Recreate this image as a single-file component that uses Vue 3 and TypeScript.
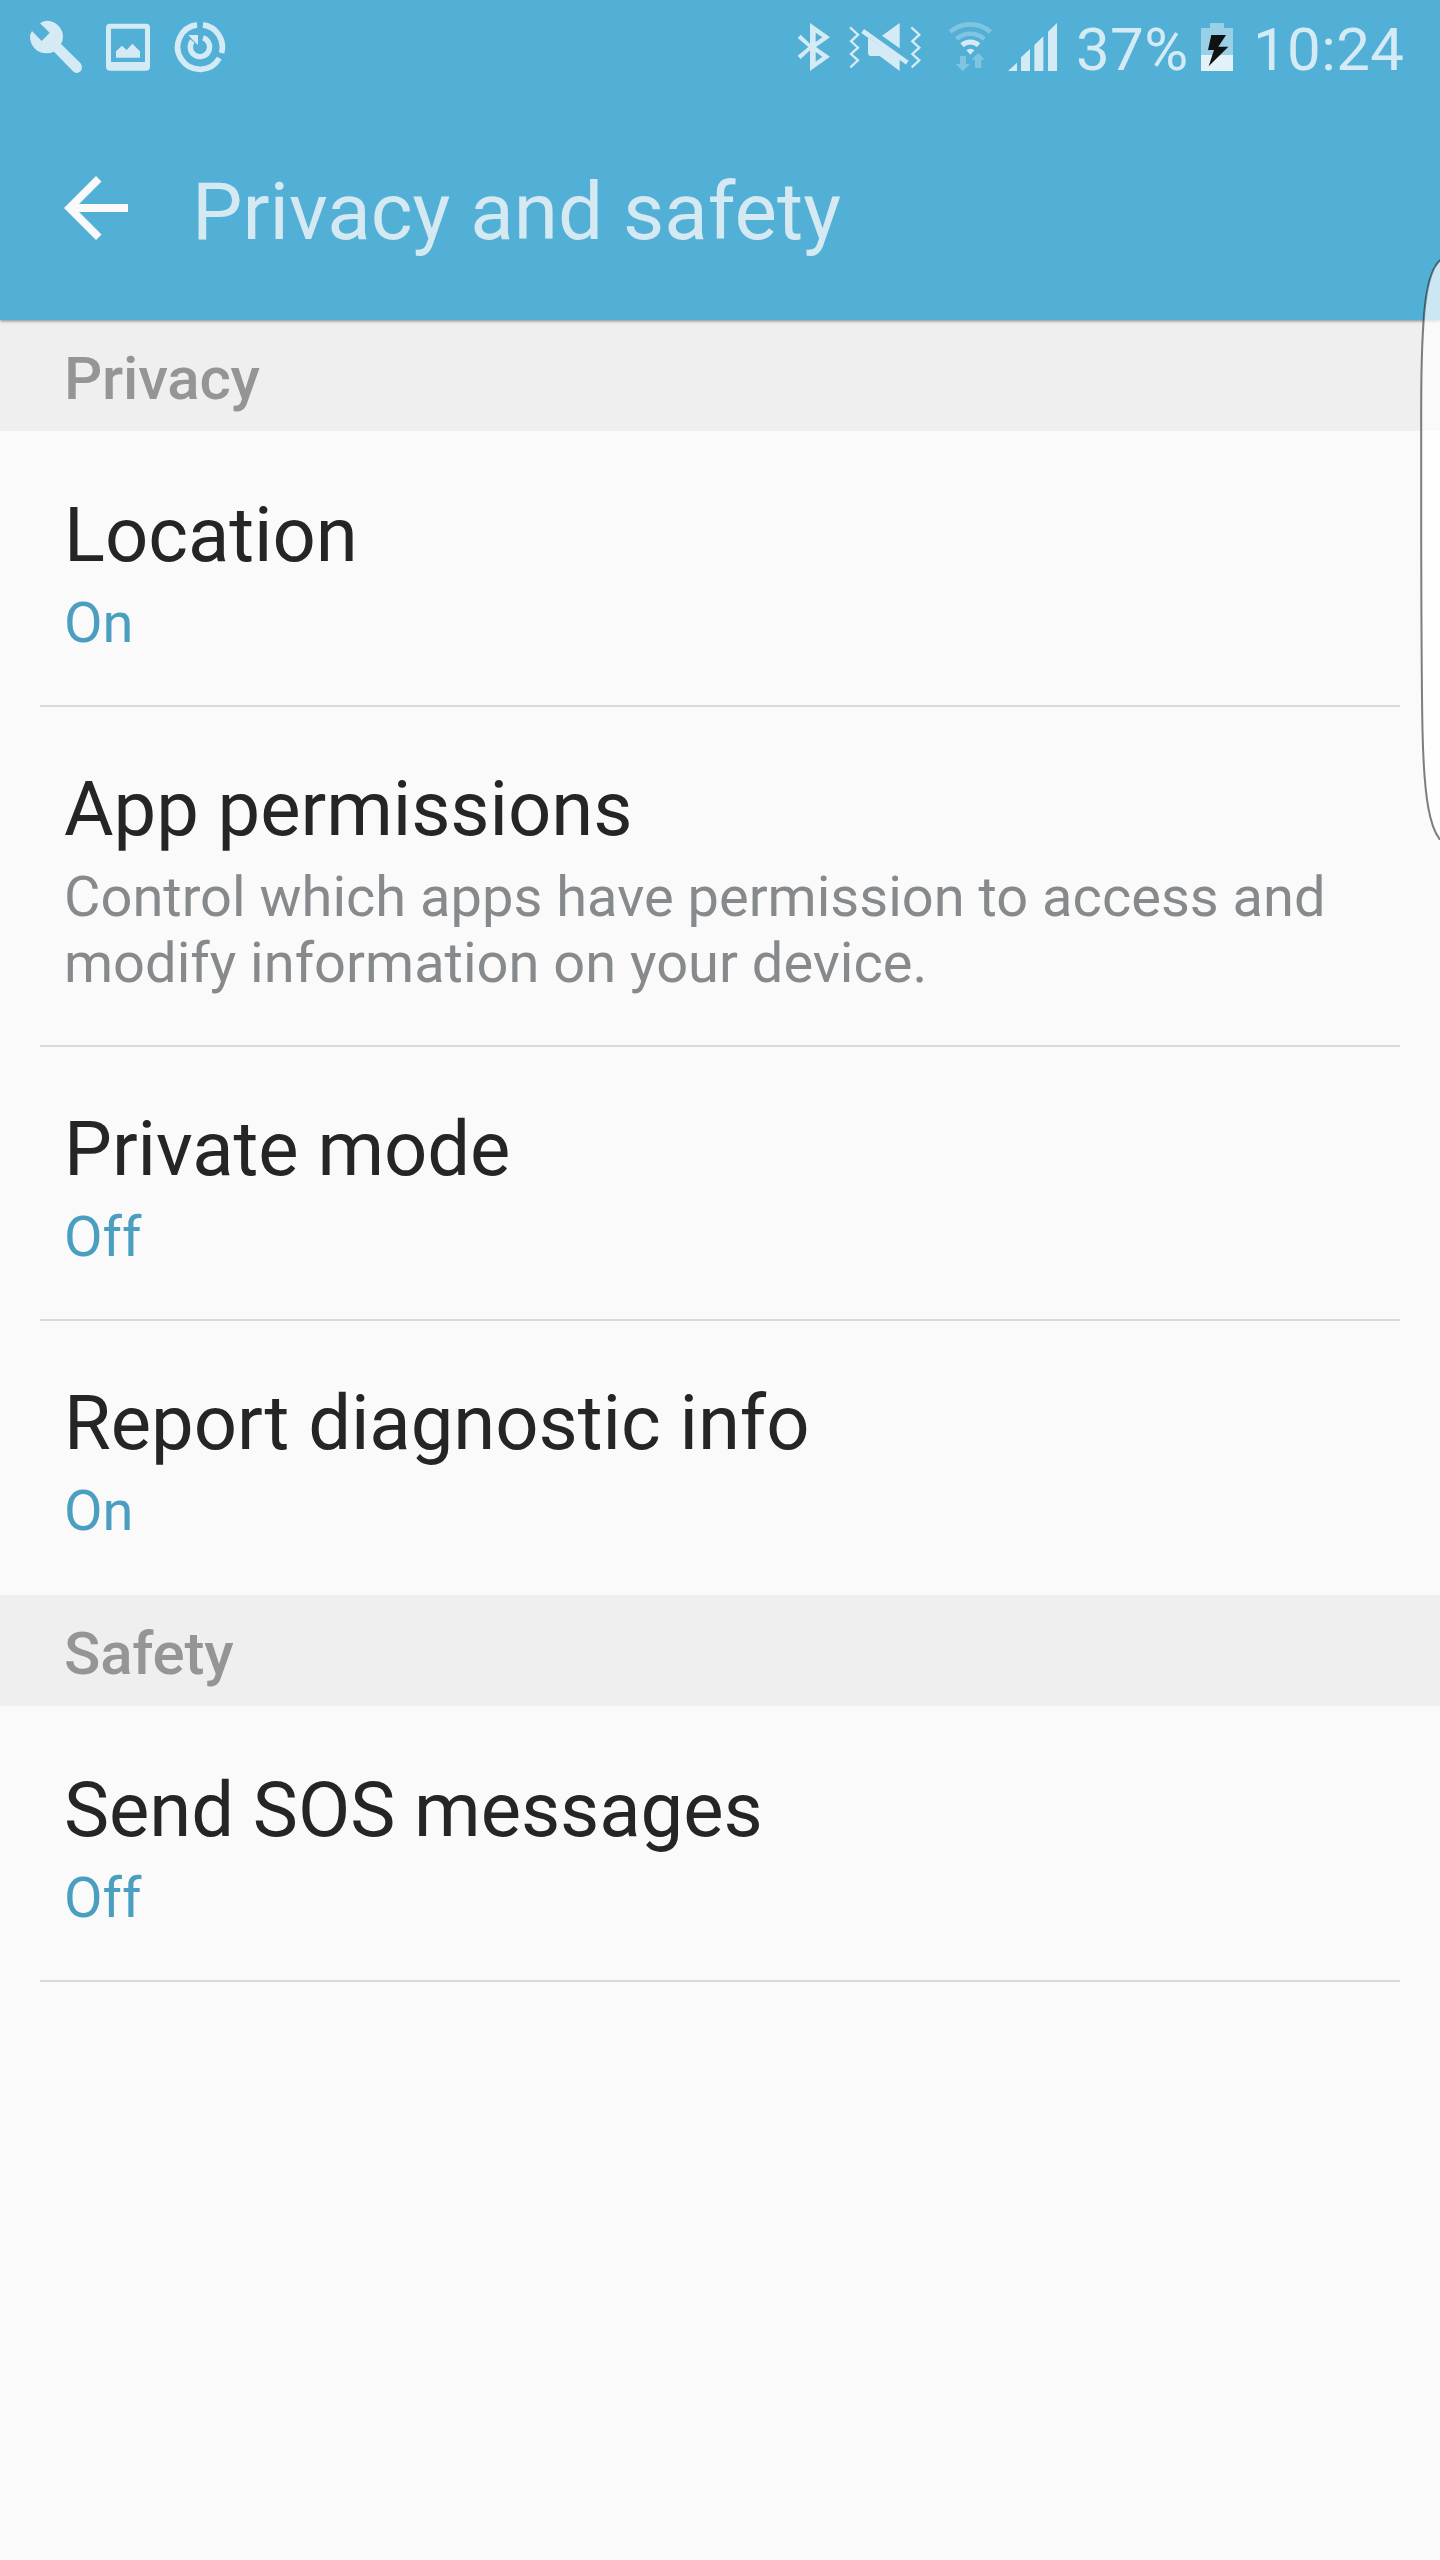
<script setup lang="ts">
interface Entry {
  title: string
  detail: string
  kind: 'value' | 'note'
}

interface Group {
  heading: string
  entries: Entry[]
  closed: boolean
}

const groups: Group[] = [
  {
    heading: 'Privacy',
    closed: false,
    entries: [
      { title: 'Location', detail: 'On', kind: 'value' },
      {
        title: 'App permissions',
        detail: 'Control which apps have permission to access and modify information on your device.',
        kind: 'note',
      },
      { title: 'Private mode', detail: 'Off', kind: 'value' },
      { title: 'Report diagnostic info', detail: 'On', kind: 'value' },
    ],
  },
  {
    heading: 'Safety',
    closed: true,
    entries: [{ title: 'Send SOS messages', detail: 'Off', kind: 'value' }],
  },
]
</script>

<template>
  <div class="screen">
    <header class="top">
      <div class="status">
        <div class="notifications">
          <svg class="wrench" viewBox="84 0 168 288">
            <path d="M120 70Q129 63 140 62A49 49 0 0 1 189 111Q189 122 183 132L241 189Q247 196 246 203Q244 217 230 219Q224 219 219 214L162 155Q151 160 140 160A49 49 0 0 1 90 111Q90 101 96 93L125 123L149 98Z" />
          </svg>
          <svg class="picture" viewBox="318 0 132 288">
            <path fill-rule="evenodd" d="M330 71H438Q450 71 450 83V200Q450 212 438 212H330Q318 212 318 200V83Q318 71 330 71ZM333 86V186H435V86Z" />
            <path d="M348 173V154L366 137L380 150L397 131L420 154V173Z" />
          </svg>
          <svg class="update" viewBox="516 0 168 288">
            <path class="line" stroke-width="17" d="M609 74.6A67 67 0 0 1 664.6 158.9M658 174.5A67 67 0 1 1 591 74.6" />
            <path class="line" stroke-width="16" d="M609 113.4A29 29 0 1 1 577 123" />
            <path d="M565 105H594V135L582 124Z" />
          </svg>
        </div>
        <div class="system">
          <svg class="bluetooth" viewBox="51 0 102 288">
            <path fill-rule="evenodd" d="M90 69L150 112L108 141L150 170L90 213V151L62 177L53 167L85 141L53 114L62 104L90 131ZM107 98V126L127 112ZM107 156V185L127 170Z" />
          </svg>
          <svg class="mute" viewBox="204 0 222 288">
            <path class="line" stroke-width="7" d="M210 82L234 104L213 124L234 143L213 162L234 181L211 202M394 82L418 104L397 124L418 143L397 162L418 181L395 202" />
            <path d="M359 69L306 107L359 145Z" />
            <path d="M264 113L359 178V213L299 168H274Q264 168 264 158Z" />
            <path class="line" stroke-width="14" d="M248 93L382 188" />
          </svg>
          <svg class="wifi" viewBox="504 0 135 288">
            <g class="dim">
              <path class="line" stroke-width="14" d="M510.600 96A91 91 0 0 1 631.400 96M529.200 117A63 63 0 0 1 612.800 117" />
              <path d="M540 168H558V192H570L548 214L527 192H540ZM595 158L614 179H604V204H585V179H575Z" />
            </g>
            <path class="line" stroke-width="15" d="M546 135.600A38 38 0 0 1 596 135.600" />
            <path d="M571 164L559 151A18 18 0 0 1 583 151Z" />
          </svg>
          <svg class="signal" viewBox="684 0 147 288">
            <path d="M684 213L711 188V213ZM723 213V172L750 147V213ZM763 213V135L790 109V213ZM804 213V95L831 69V213Z" />
          </svg>
          <span class="percent">37%</span>
          <svg class="battery" viewBox="423 0 96 288">
            <path class="cell" d="M450 69H492V84H519V165H423V84H450Z" />
            <path class="charge" d="M423 165H519V213H423Z" />
            <path class="bolt" d="M454 105H498L475 140H505L446 199L462 150H444Z" />
          </svg>
          <span class="clock">10:24</span>
        </div>
      </div>
      <div class="bar">
        <svg class="back" viewBox="0 0 64 64">
          <path d="M32 0L37.500 5.500L15 28H64V36H15L37.500 58.500L32 64L0 32Z" />
        </svg>
        <h1>Privacy and safety</h1>
      </div>
    </header>

    <main>
      <section v-for="group in groups" :key="group.heading">
        <h2>{{ group.heading }}</h2>
        <div v-for="(entry, index) in group.entries" :key="entry.title" class="entry">
          <div class="rule" :class="{ shown: index > 0 }"></div>
          <div class="title">{{ entry.title }}</div>
          <div class="detail" :class="entry.kind">{{ entry.detail }}</div>
        </div>
        <div class="rule" :class="{ shown: group.closed }"></div>
      </section>
    </main>

    <svg class="edge" viewBox="0 0 24 600">
      <path d="M26 19C10 29 5.200 70 5.200 170V300C5.500 400 5.500 440 6.500 490C8 560 14 590 26 602" />
    </svg>
  </div>
</template>

<style>
body {
  margin: 0;
  background: #fafafa;
}
</style>

<style scoped>
.screen {
  position: relative;
  width: 1440px;
  height: 2560px;
  overflow: hidden;
  background: #fafafa;
  font-family: Roboto, "Liberation Sans", sans-serif;
}

.top {
  position: relative;
  height: 320px;
  background: #52afd5;
  box-shadow: 0 1px 3px rgba(0, 0, 0, 0.45);
}

.status {
  display: flex;
  justify-content: space-between;
  height: 96px;
  color: #d4ebf5;
}

.status svg {
  display: block;
  flex: none;
  height: 96px;
  fill: currentColor;
}

.status .line {
  fill: none;
  stroke: currentColor;
}

.notifications {
  display: flex;
  gap: 22px;
  padding-left: 28px;
}

.wrench,
.update {
  width: 56px;
}

.picture {
  width: 44px;
}

.system {
  display: flex;
  width: 643px;
  font-size: 60px;
  line-height: 70px;
  letter-spacing: 0.4px;
}

.bluetooth {
  width: 34px;
}

.mute {
  width: 74px;
  margin-left: 17px;
}

.wifi {
  width: 45px;
  margin-left: 26px;
}

.dim {
  opacity: 0.35;
}

.signal {
  width: 49px;
  margin-left: 15px;
}

.percent {
  width: 125px;
  padding-top: 15px;
  margin-left: 19px;
}

.battery {
  width: 32px;
}

.clock {
  padding-top: 15px;
  margin-left: 20px;
}

.cell {
  fill: #9ad0e6;
}

.charge {
  fill: #e3f2f9;
}

.bolt {
  fill: #121212;
}

.bar {
  display: flex;
  align-items: flex-start;
  height: 224px;
  padding-left: 64px;
}

.back {
  width: 64px;
  height: 64px;
  margin-top: 80px;
  fill: #fafafa;
}

h1 {
  margin: 69px 0 0 64px;
  font-size: 80px;
  font-weight: 400;
  line-height: 94px;
  color: #d5e9f2;
}

h2 {
  box-sizing: border-box;
  height: 111px;
  margin: 0;
  padding: 23px 64px 17px;
  background: #efefef;
  font-size: 60px;
  font-weight: 500;
  line-height: 71px;
  letter-spacing: -0.2px;
  color: #959595;
}

.entry {
  padding-bottom: 49px;
}

.rule {
  height: 2px;
  margin: 0 40px;
}

.rule.shown {
  background: #d9dada;
}

.title {
  padding: 57px 64px 0;
  font-size: 76px;
  line-height: 90px;
  letter-spacing: -0.05px;
  color: #252525;
}

.detail {
  padding: 10px 64px 0;
  font-size: 56px;
  line-height: 66px;
}

.value {
  color: #4a9ebf;
}

.note {
  color: #868a8d;
}

.edge {
  position: absolute;
  top: 240px;
  right: 0;
  width: 24px;
  height: 600px;
  fill: rgba(255, 255, 255, 0.7);
  stroke: rgba(0, 0, 0, 0.5);
  stroke-width: 2;
}
</style>
